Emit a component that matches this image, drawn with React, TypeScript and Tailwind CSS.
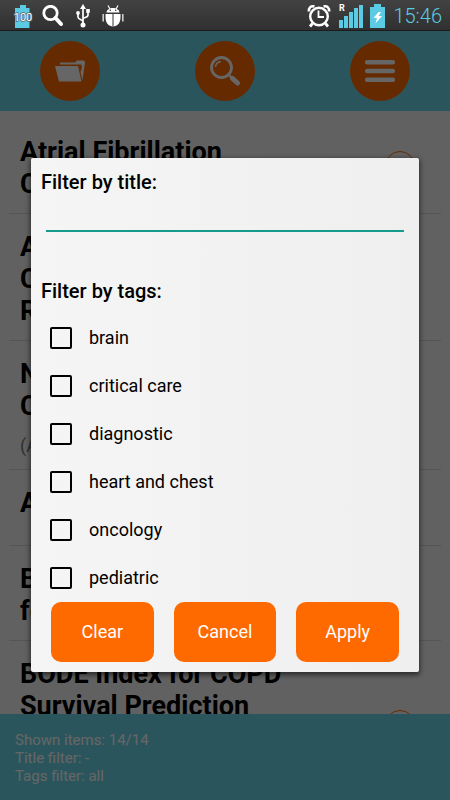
import React from "react";

type Entry = { lines: string[]; note?: string; height: string };

const entries: Entry[] = [
  { lines: ["Atrial Fibrillation", "CHADS Score"], height: "min-h-[95px]" },
  { lines: ["Acute", "Coronary", "Risk"], height: "min-h-[127px]" },
  { lines: ["National", "Criteria"], note: "(Adult)", height: "min-h-[129px]" },
  { lines: ["Apgar"], height: "min-h-[76px]" },
  { lines: ["Bleeding", "for Adults"], height: "min-h-[95px]" },
  { lines: ["BODE Index for COPD", "Survival Prediction"], height: "min-h-[168px]" },
];

const tags = ["brain", "critical care", "diagnostic", "heart and chest", "oncology", "pediatric"];

function StatusBar() {
  return (
    <div className="flex h-[31px] shrink-0 items-center justify-between border-b border-[#1c1c1c] bg-linear-to-b from-[#424242] to-[#303030] pt-px pr-2 pl-3.5">
      <div className="flex items-center">
        <svg width="18" height="24" viewBox="0 0 18 24" className="overflow-visible">
          <path d="M1 4H6V1H12V4H15.500V24H1Z" fill="#5bcbe4" />
          <text x="9" y="17" textAnchor="middle" fontSize="11" fill="#fff" stroke="#5a6a70" strokeWidth="1.600" paintOrder="stroke" fontFamily="Roboto, sans-serif">100</text>
        </svg>
        <svg width="22" height="22" viewBox="0 0 22 22" className="ml-2.5" fill="none" stroke="#fff">
          <circle cx="8.500" cy="8" r="6.700" strokeWidth="2.800" />
          <path d="M13.500 13L19 19" strokeWidth="4" strokeLinecap="round" />
        </svg>
        <svg width="14" height="24" viewBox="0 0 14 24" className="ml-3" fill="none" stroke="#fff" strokeWidth="1.700">
          <path d="M7 4V20M7 18C7 15 2 16 2 13V9M7 15C7 13 12 14 12 11V7" />
          <path d="M7 0L10 5H4Z" fill="#fff" stroke="none" />
          <circle cx="7" cy="21" r="2.500" fill="#fff" stroke="none" />
          <circle cx="2" cy="9" r="1.900" fill="#fff" stroke="none" />
          <path d="M10.200 5H13.800V8.800H10.200Z" fill="#fff" stroke="none" />
        </svg>
        <svg width="22" height="22" viewBox="0 0 22 22" className="ml-3" fill="#fff">
          <path d="M4.500 7.500C5 1.500 17 1.500 17.500 7.500Z" />
          <path d="M6 0.500L8 4M16 0.500L14 4" stroke="#fff" strokeWidth="1.200" />
          <path d="M3.500 9H18.500V12C18.500 18 15.500 21.500 11 21.500C6.500 21.500 3.500 18 3.500 12Z" />
          <path d="M11 9V21.500" stroke="#353535" strokeWidth="1" />
          <circle cx="8.300" cy="5.300" r="0.800" fill="#353535" />
          <circle cx="13.700" cy="5.300" r="0.800" fill="#353535" />
          <path d="M1.200 9V16.500M20.800 9V16.500" fill="none" stroke="#ccc" strokeWidth="1.600" />
        </svg>
      </div>
      <div className="flex items-center">
        <svg width="24" height="24" viewBox="0 0 24 24" fill="none" stroke="#fff">
          <circle cx="12" cy="12.500" r="8.800" strokeWidth="2.400" />
          <path d="M11.500 6.500V13H17" strokeWidth="1.800" />
          <path d="M2 7.500C1.500 3.500 4 1.500 7.500 2.500M22 7.500C22.500 3.500 20 1.500 16.500 2.500" strokeWidth="2.600" />
          <path d="M5.500 19.500L3 22.500M18.500 19.500L21 22.500" strokeWidth="2.800" />
        </svg>
        <svg width="25" height="24" viewBox="0 0 25 24" className="ml-2" fill="#5bcbe4">
          <path d="M0 16H4V24H0ZM5 12H9V24H5ZM10 8H14V24H10ZM15 4H19V24H15ZM20 1H24V24H20Z" />
          <text x="0" y="7" fontSize="9" fontWeight="700" fill="#fff" fontFamily="Roboto, sans-serif">R</text>
        </svg>
        <svg width="15" height="24" viewBox="0 0 15 24" className="ml-1.5">
          <path d="M0 3H4V0H11V3H15V24H0Z" fill="#5bcbe4" />
          <path d="M8.500 8L3.500 14H7L5.500 19.500L12 12H8.500L11 8Z" fill="#fff" />
        </svg>
        <span className="ml-2 text-xl leading-6 font-light text-[#5bcbe4]">15:46</span>
      </div>
    </div>
  );
}

function RoundButton({ label, children }: { label: string; children: React.ReactNode }) {
  return (
    <button type="button" aria-label={label} className="flex size-[60px] items-center justify-center rounded-full bg-[#ff6a00]">
      {children}
    </button>
  );
}

function Toolbar() {
  return (
    <header className="flex h-20 shrink-0 items-center justify-between bg-[#6bd5e6] px-10">
      <RoundButton label="Open">
        <svg width="30" height="22" viewBox="0 0 30 22" fill="#fff">
          <path d="M0 6H23L26.500 21.500H4Z" />
          <path d="M5 4.500V2.500H20L22 0.500H28Q30 0.500 30 2.500L27.500 20.500L24.500 8L26.500 4.500Z" />
          <path d="M23.500 5.500H27L26 12.500Z" fill="#ff6a00" />
        </svg>
      </RoundButton>
      <RoundButton label="Search">
        <svg width="32" height="32" viewBox="0 0 32 32" fill="none" stroke="#fff">
          <circle cx="12.500" cy="12.500" r="10" strokeWidth="2.800" />
          <path d="M6.500 12Q7 7 12 6.500" strokeWidth="1.500" />
          <path d="M20.500 20.500L23 23" strokeWidth="2.500" />
          <path d="M23.500 23.500L28.500 28" strokeWidth="5" strokeLinecap="round" />
        </svg>
      </RoundButton>
      <RoundButton label="Menu">
        <svg width="30" height="22" viewBox="0 0 30 22" fill="#fff">
          <rect width="30" height="4.500" rx="2" />
          <rect y="8.700" width="30" height="4.500" rx="2" />
          <rect y="17.500" width="30" height="4.500" rx="2" />
        </svg>
      </RoundButton>
    </header>
  );
}

function EntryRow({ entry }: { entry: Entry }) {
  return (
    <li className={`flex shrink-0 items-center justify-between border-b border-[#d4d4d4] pr-[26px] pl-[11px] ${entry.height}`}>
      <div className="self-stretch pt-[17px]">
        <h2 className="text-[27px] leading-8 font-bold">
          {entry.lines.map((line) => (
            <span key={line} className="block">{line}</span>
          ))}
        </h2>
        {entry.note && <p className="mt-3 text-lg leading-6 text-[#777]">{entry.note}</p>}
      </div>
      <span className="size-[30px] rounded-full border border-[#ff6a00]" />
    </li>
  );
}

function FilterDialog() {
  return (
    <form role="dialog" aria-label="Filter" className="w-full rounded-xs bg-linear-to-r from-[#f5f5f5] to-[#efefef] px-2.5 pb-2.5 shadow-[0_2px_5px_1px_rgba(0,0,0,0.55)]">
      <label htmlFor="title-filter" className="block pt-3 text-xl leading-6 font-medium">Filter by title:</label>
      <input id="title-filter" type="text" className="mx-[5px] block h-[38px] w-[calc(100%-10px)] border-b-2 border-[#159a8b] bg-transparent px-1 text-lg outline-none" />
      <fieldset>
        <legend className="pt-[47px] pb-[11px] text-xl leading-6 font-medium">Filter by tags:</legend>
        {tags.map((tag) => (
          <label key={tag} className="flex h-12 items-center gap-[17px] pl-[9px] text-lg">
            <input type="checkbox" className="size-[22px] appearance-none rounded-xs border-2 border-black checked:bg-[#159a8b]" />
            {tag}
          </label>
        ))}
      </fieldset>
      <div className="flex gap-5 px-2.5 text-lg text-white">
        <button type="reset" className="h-[60px] flex-1 rounded-[10px] bg-[#ff6a00]">Clear</button>
        <button type="button" className="h-[60px] flex-1 rounded-[10px] bg-[#ff6a00]">Cancel</button>
        <button type="button" className="h-[60px] flex-1 rounded-[10px] bg-[#ff6a00]">Apply</button>
      </div>
    </form>
  );
}

export default function App() {
  return (
    <div className="flex h-screen flex-col overflow-hidden bg-[#f2f2f2] font-[Roboto,sans-serif] text-black">
      <StatusBar />
      <div className="relative flex min-h-0 flex-1 flex-col">
        <Toolbar />
        <ul className="flex min-h-0 flex-1 flex-col overflow-hidden px-[9px] pt-2">
          {entries.map((entry) => (
            <EntryRow key={entry.lines[0]} entry={entry} />
          ))}
        </ul>
        <footer className="h-[86px] shrink-0 bg-[#6bd5e6] px-[15px] pt-[17px] text-[15px] leading-[18px] text-white">
          <p>Shown items: 14/14</p>
          <p>Title filter: -</p>
          <p>Tags filter: all</p>
        </footer>
        <div className="absolute inset-0 flex items-center justify-center bg-black/60 px-[31px] pb-0.5">
          <FilterDialog />
        </div>
      </div>
    </div>
  );
}
